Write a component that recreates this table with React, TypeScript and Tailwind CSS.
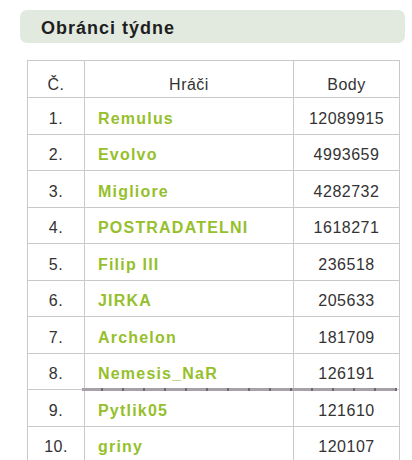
const players = [
  { rank: '1.', name: 'Remulus', points: '12089915' },
  { rank: '2.', name: 'Evolvo', points: '4993659' },
  { rank: '3.', name: 'Migliore', points: '4282732' },
  { rank: '4.', name: 'POSTRADATELNI', points: '1618271' },
  { rank: '5.', name: 'Filip III', points: '236518' },
  { rank: '6.', name: 'JIRKA', points: '205633' },
  { rank: '7.', name: 'Archelon', points: '181709' },
  { rank: '8.', name: 'Nemesis_NaR', points: '126191' },
  { rank: '9.', name: 'Pytlik05', points: '121610' },
  { rank: '10.', name: 'griny', points: '120107' },
];

export default function App() {
  return (
    <div className="h-[460px] w-[412px] overflow-hidden bg-white pt-[10px] font-['Liberation_Sans',Arial,sans-serif] text-[#333]">
      {/* Title bar */}
      <div className="ml-[20px] flex h-[33px] w-[385px] items-center rounded-[7px] bg-[#e2eadf] pl-[21px] pt-[4px]">
        <h2 className="text-[18px] font-bold tracking-[1px] text-[#1e1e1e]">Obránci týdne</h2>
      </div>

      {/* Table */}
      <div className="relative ml-[27px] mt-[17px] w-[372px]">
        <table className="w-full table-fixed border-collapse text-[16px] tracking-[0.5px]">
          <colgroup>
            <col className="w-[57px]" />
            <col className="w-[209px]" />
            <col className="w-[106px]" />
          </colgroup>
          <thead>
            <tr className="h-[37px]">
              <th className="border border-[#c9c9c9] pt-[12px] text-center font-normal">Č.</th>
              <th className="border border-[#c9c9c9] pt-[12px] text-center font-normal">Hráči</th>
              <th className="border border-[#c9c9c9] pt-[12px] text-center font-normal">Body</th>
            </tr>
          </thead>
          <tbody>
            {players.map((p) => (
              <tr key={p.rank} className="h-[36.5px]">
                <td className="border border-[#c9c9c9] pt-[6px] text-center">{p.rank}</td>
                <td className="border border-[#c9c9c9] pl-[13px] pt-[6px] font-bold tracking-[1.2px] text-[#96bf2c]">
                  {p.name}
                </td>
                <td className="border border-[#c9c9c9] pt-[6px] text-center">{p.points}</td>
              </tr>
            ))}
          </tbody>
        </table>
        {/* dotted divider under 8th place */}
        <div className="absolute left-[55px] top-[328px] h-[3px] w-[315px] bg-[repeating-linear-gradient(90deg,#a8a2a8_0_19px,#6f6874_19px_21px)]" />
      </div>
    </div>
  );
}
